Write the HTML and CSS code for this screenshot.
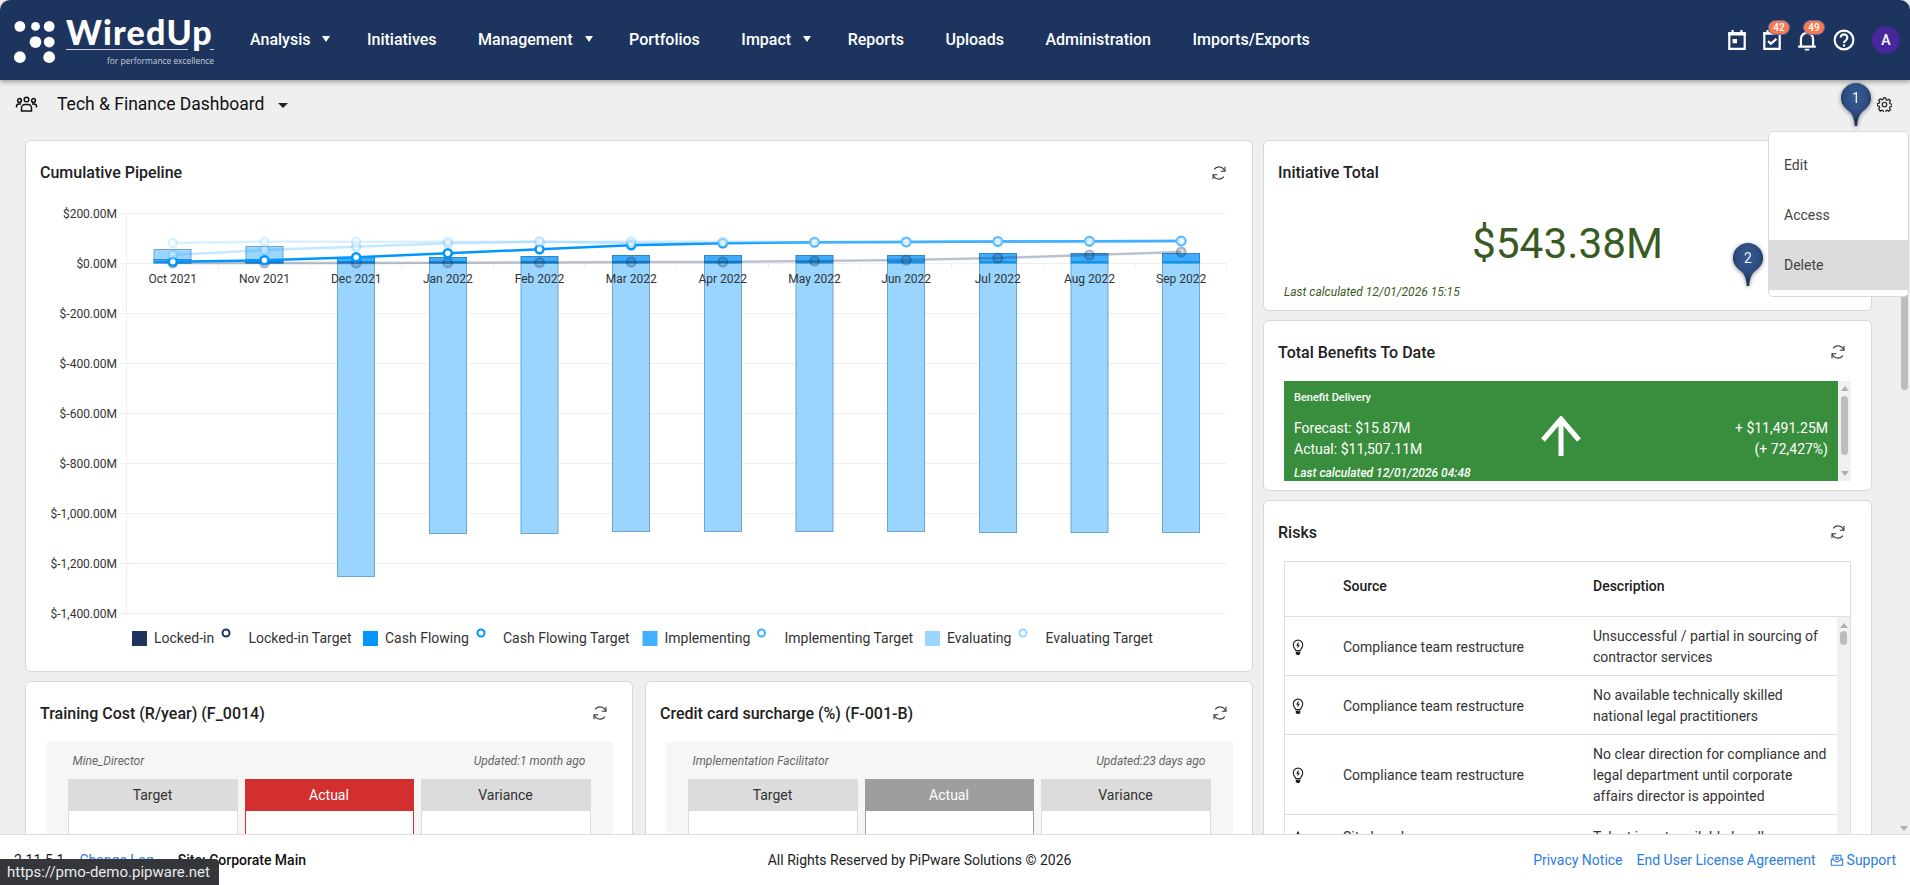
FILE: index.html
```html
<!DOCTYPE html>
<html lang="en">
<head>
<meta charset="utf-8">
<title>Tech &amp; Finance Dashboard</title>
<link rel="stylesheet" href="styles.css">
</head>
<body>
<svg class="defs" aria-hidden="true">
  <symbol id="i-refresh" viewBox="0 0 16 16">
    <g fill="none" stroke="currentColor" stroke-width="1.100">
      <path d="M13.6 6.2A5.8 5.8 0 0 0 3.2 4.400M2.400 9.800A5.800 5.800 0 0 0 12.800 11.600"/>
      <path d="M14 1.800v4.400H9.800M2 14.200V9.800h4.200"/>
    </g>
  </symbol>
  <symbol id="i-bulb" viewBox="0 0 12 18">
    <g fill="none" stroke="#222" stroke-width="1.200">
      <path d="M3.500 12.200C3.200 10.400 1 9.400 1 6.200a5 5 0 0 1 10 0c0 3.200-2.200 4.200-2.500 6z"/>
      <path d="M6.500 3.600 5 6.600h2L5.500 9"/>
    </g>
    <path d="M3.600 13.200h4.800v2.200l-1 1.600H4.600l-1-1.600z" fill="#222"/>
  </symbol>
  <symbol id="i-star" viewBox="0 0 16 16">
    <path d="M8 1.600l2 4.300 4.600.5-3.400 3.200.9 4.600L8 11.900l-4.100 2.300.9-4.600L1.400 6.400 6 5.900z" fill="none" stroke="#222" stroke-width="1.200"/>
  </symbol>
</svg>

<header class="topbar">
  <a class="logo">
    <svg class="logo-dots" viewBox="0 0 44 44" aria-hidden="true">
      <g fill="#fff">
        <circle cx="6" cy="5.500" r="5.500"/><circle cx="22" cy="5.500" r="4.500"/><circle cx="36" cy="5.500" r="5.500"/>
        <circle cx="22" cy="21.500" r="6"/><circle cx="36" cy="21.500" r="5.500"/>
        <circle cx="6" cy="37" r="6"/><circle cx="36" cy="37" r="6"/>
      </g>
    </svg>
    <span class="logo-text">
      <span class="logo-name">WiredUp</span>
      <span class="logo-rule"><i></i><i></i></span>
      <span class="logo-tag">for performance excellence</span>
    </span>
  </a>
  <nav class="nav">
    <a class="nav-item has-caret">Analysis</a>
    <a class="nav-item">Initiatives</a>
    <a class="nav-item has-caret">Management</a>
    <a class="nav-item">Portfolios</a>
    <a class="nav-item has-caret">Impact</a>
    <a class="nav-item">Reports</a>
    <a class="nav-item">Uploads</a>
    <a class="nav-item">Administration</a>
    <a class="nav-item">Imports/Exports</a>
  </nav>
  <div class="top-icons">
    <span class="top-icon">
      <svg viewBox="1 1 20 20" aria-hidden="true"><path d="M4 5h14v14H4z" fill="none" stroke="#fff" stroke-width="2"/><path d="M3 4h16v3H3zM6 2h2v3H6zM14 2h2v3h-2zM7 10h4v4H7z" fill="#fff"/></svg>
    </span>
    <span class="top-icon">
      <svg viewBox="1 1 20 20" aria-hidden="true"><path d="M4 5h14v14H4z" fill="none" stroke="#fff" stroke-width="2"/><path d="M3 4h16v2H3zM6 2h2v3H6zM14 2h2v3h-2z" fill="#fff"/><path d="M7.500 12l2.500 2.500 5-4.500" fill="none" stroke="#fff" stroke-width="2"/></svg>
      <b class="badge">42</b>
    </span>
    <span class="top-icon">
      <svg viewBox="1 1 20 20" aria-hidden="true"><path d="M3 17h16M5.500 17V10a5.500 5.500 0 0 1 11 0v7" fill="none" stroke="#fff" stroke-width="2"/><path d="M9 19h4v1.500H9zM10 2.500h2v2h-2z" fill="#fff"/></svg>
      <b class="badge">49</b>
    </span>
    <span class="top-icon help">
      <svg viewBox="1 1 20 20" aria-hidden="true"><circle cx="11" cy="11" r="8.500" fill="none" stroke="#fff" stroke-width="2"/><path d="M8 8.800a3 3 0 1 1 4.700 2.500c-1.100.7-1.700 1.200-1.700 2.400" fill="none" stroke="#fff" stroke-width="2"/><rect x="10" y="15" width="2" height="2" fill="#fff"/></svg>
    </span>
    <span class="avatar">A</span>
  </div>
</header>

<div class="subbar">
  <svg class="group-icon" viewBox="0 0 22 16" aria-hidden="true">
    <g fill="none" stroke="#111" stroke-width="1.500">
      <circle cx="11" cy="3.500" r="2.300"/><circle cx="4" cy="4.500" r="1.900"/><circle cx="18" cy="4.500" r="1.900"/>
      <path d="M6 15v-3a3.500 3.500 0 0 1 3.500-3.500h3A3.500 3.500 0 0 1 16 12v3zM1 11.500v-1.200C1 9 2 8 3.500 8h2M21 11.500v-1.200C21 9 20 8 18.500 8h-2"/>
    </g>
  </svg>
  <h1 class="page-title">Tech &amp; Finance Dashboard</h1>
  <span class="caret dark"></span>
  <svg class="gear" viewBox="0 0 16 16" aria-hidden="true">
    <path d="M6.800 1h2.400l.4 2 1.300.6 1.800-1.100 1.600 1.700-1.100 1.700.6 1.400 2 .4v2.400l-2 .4-.6 1.400 1.100 1.700-1.700 1.600-1.700-1.100-1.300.6-.4 2H6.800l-.4-2-1.300-.6-1.800 1.100L1.700 13l1.100-1.700-.6-1.400-2-.4V7.100l2-.4.6-1.400-1.100-1.700 1.700-1.600 1.700 1.100 1.300-.6z" fill="none" stroke="#222" stroke-width="1.300" transform="translate(.1 -.1)"/>
    <circle cx="8" cy="8" r="2.400" fill="none" stroke="#222" stroke-width="1.300"/>
  </svg>
</div>

<main class="page">
  <div class="dashboard">
    <div class="col-left">
      <section class="card card-pipeline">
        <div class="card-head"><h2>Cumulative Pipeline</h2><svg class="refresh"><use href="#i-refresh"/></svg></div>
        <svg class="chart" viewBox="26 202 1226 469" aria-label="Cumulative Pipeline chart">
          <g class="grid">
            <path d="M120 213.500H1226.500M120 263.500H1226.500M120 313.500H1226.500M120 363.500H1226.500M120 413.500H1226.500M120 463.500H1226.500M120 513.500H1226.500M120 563.500H1226.500M120 613.500H1226.500"/>
            <path d="M126.500 213V613M218.500 263v6M310 263v6M401.500 263v6M493.500 263v6M585 263v6M676.500 263v6M768.500 263v6M860 263v6M951.500 263v6M1043.500 263v6M1135 263v6M1226.500 263v6"/>
          </g>
          <g class="bars-eval">
            <rect x="154" y="249.500" width="37" height="13.500"/>
            <rect x="246" y="246.500" width="37" height="16.500"/>
            <rect x="337.500" y="263" width="37" height="313.500"/>
            <rect x="429.500" y="263" width="37" height="270.500"/>
            <rect x="521" y="263" width="37" height="270.500"/>
            <rect x="612.500" y="263" width="37" height="268.500"/>
            <rect x="704.500" y="263" width="37" height="268.500"/>
            <rect x="796" y="263" width="37" height="268.500"/>
            <rect x="887.500" y="263" width="37" height="268.500"/>
            <rect x="979.500" y="263" width="37" height="269.500"/>
            <rect x="1071" y="263" width="37" height="269.500"/>
            <rect x="1162.500" y="263" width="37" height="269.500"/>
          </g>
          <g class="bars-impl">
            <rect x="154" y="259.500" width="37" height="3.500"/>
            <rect x="246" y="259.500" width="37" height="3.500"/>
            <rect x="337.500" y="257.500" width="37" height="5.500"/>
            <rect x="429.500" y="257.500" width="37" height="5.500"/>
            <rect x="521" y="256.500" width="37" height="6.500"/>
            <rect x="612.500" y="255.500" width="37" height="7.500"/>
            <rect x="704.500" y="255.500" width="37" height="7.500"/>
            <rect x="796" y="255.500" width="37" height="7.500"/>
            <rect x="887.500" y="255.500" width="37" height="7.500"/>
            <rect x="979.500" y="253.500" width="37" height="9.500"/>
            <rect x="1071" y="253.500" width="37" height="9.500"/>
            <rect x="1162.500" y="253.500" width="37" height="9.500"/>
          </g>
          <g class="bars-cash">
            <rect x="154" y="261" width="37" height="2"/>
            <rect x="246" y="261" width="37" height="2"/>
            <rect x="337.500" y="261" width="37" height="2"/>
            <rect x="429.500" y="261" width="37" height="2"/>
            <rect x="521" y="261" width="37" height="2"/>
            <rect x="612.500" y="261" width="37" height="2"/>
            <rect x="704.500" y="261" width="37" height="2"/>
            <rect x="796" y="261" width="37" height="2"/>
            <rect x="887.500" y="261" width="37" height="2"/>
            <rect x="979.500" y="261" width="37" height="2"/>
            <rect x="1071" y="261" width="37" height="2"/>
            <rect x="1162.500" y="261" width="37" height="2"/>
          </g>
          <g class="line-locked">
            <polyline points="172.800,263 264.500,263 356.200,263 447.800,262.700 539.500,262.500 631.200,262 722.800,262 814.500,261 906.200,260 997.800,258 1089.500,255 1181.200,252"/>
            <circle cx="172.800" cy="263" r="4.500"/><circle cx="264.500" cy="263" r="4.500"/><circle cx="356.200" cy="263" r="4.500"/><circle cx="447.800" cy="262.700" r="4.500"/><circle cx="539.500" cy="262.500" r="4.500"/><circle cx="631.200" cy="262" r="4.500"/><circle cx="722.800" cy="262" r="4.500"/><circle cx="814.500" cy="261" r="4.500"/><circle cx="906.200" cy="260" r="4.500"/><circle cx="997.800" cy="258" r="4.500"/><circle cx="1089.500" cy="255" r="4.500"/><circle cx="1181.200" cy="252" r="4.500"/>
          </g>
          <g class="line-cash">
            <polyline points="172.800,261.700 264.500,260.300 356.200,257.300 447.800,253.300 539.500,249.300 631.200,245.300 722.800,243.300 814.500,242.300 906.200,242 997.800,241.500 1089.500,241.300 1181.200,241"/>
            <circle cx="172.800" cy="261.700" r="4"/><circle cx="264.500" cy="260.300" r="4"/><circle cx="356.200" cy="257.300" r="4"/><circle cx="447.800" cy="253.300" r="4"/><circle cx="539.500" cy="249.300" r="4"/><circle cx="631.200" cy="245.300" r="4"/><circle cx="722.800" cy="243.300" r="4"/><circle cx="814.500" cy="242.300" r="4"/><circle cx="906.200" cy="242" r="4"/><circle cx="997.800" cy="241.500" r="4"/><circle cx="1089.500" cy="241.300" r="4"/><circle cx="1181.200" cy="241" r="4"/>
          </g>
          <g class="line-impl">
            <polyline points="172.800,255 264.500,250 356.200,246.700 447.800,243.300 539.500,241.700 631.200,243 722.800,243 814.500,242.300 906.200,242 997.800,241.500 1089.500,241.300 1181.200,241"/>
            <circle cx="172.800" cy="255" r="4"/><circle cx="264.500" cy="250" r="4"/><circle cx="356.200" cy="246.700" r="4"/><circle cx="447.800" cy="243.300" r="4"/><circle cx="539.500" cy="241.700" r="4"/><circle cx="631.200" cy="243" r="4"/><circle cx="722.800" cy="243" r="4"/><circle cx="814.500" cy="242.300" r="4"/><circle cx="906.200" cy="242" r="4"/><circle cx="997.800" cy="241.500" r="4"/><circle cx="1089.500" cy="241.300" r="4"/><circle cx="1181.200" cy="241" r="4"/>
          </g>
          <g class="line-eval">
            <polyline points="172.800,243 264.500,241.700 356.200,241.700 447.800,241.700 539.500,241.700 631.200,241.500 722.800,241.500 814.500,242 906.200,242 997.800,241.500 1089.500,241.300 1181.200,241"/>
            <circle cx="172.800" cy="243" r="4"/><circle cx="264.500" cy="241.700" r="4"/><circle cx="356.200" cy="241.700" r="4"/><circle cx="447.800" cy="241.700" r="4"/><circle cx="539.500" cy="241.700" r="4"/><circle cx="631.200" cy="241.500" r="4"/><circle cx="722.800" cy="241.500" r="4"/><circle cx="814.500" cy="242" r="4"/><circle cx="906.200" cy="242" r="4"/><circle cx="997.800" cy="241.500" r="4"/><circle cx="1089.500" cy="241.300" r="4"/><circle cx="1181.200" cy="241" r="4"/>
          </g>
          <g class="axis-y">
            <text x="117" y="217.500">$200.00M</text>
            <text x="117" y="267.500">$0.00M</text>
            <text x="117" y="317.500">$-200.00M</text>
            <text x="117" y="367.500">$-400.00M</text>
            <text x="117" y="417.500">$-600.00M</text>
            <text x="117" y="467.500">$-800.00M</text>
            <text x="117" y="517.500">$-1,000.00M</text>
            <text x="117" y="567.500">$-1,200.00M</text>
            <text x="117" y="617.500">$-1,400.00M</text>
          </g>
          <g class="axis-x">
            <text x="172.800" y="282.500">Oct 2021</text>
            <text x="264.500" y="282.500">Nov 2021</text>
            <text x="356.200" y="282.500">Dec 2021</text>
            <text x="447.800" y="282.500">Jan 2022</text>
            <text x="539.500" y="282.500">Feb 2022</text>
            <text x="631.200" y="282.500">Mar 2022</text>
            <text x="722.800" y="282.500">Apr 2022</text>
            <text x="814.500" y="282.500">May 2022</text>
            <text x="906.200" y="282.500">Jun 2022</text>
            <text x="997.800" y="282.500">Jul 2022</text>
            <text x="1089.500" y="282.500">Aug 2022</text>
            <text x="1181.200" y="282.500">Sep 2022</text>
          </g>
          <g class="legend">
            <rect class="sw-locked" x="132" y="631" width="15" height="15"/><text x="154" y="643">Locked-in</text>
            <circle class="mk-locked" cx="226" cy="633" r="3.500"/><text x="248.500" y="643">Locked-in Target</text>
            <rect class="sw-cash" x="363" y="631" width="15" height="15"/><text x="385" y="643">Cash Flowing</text>
            <circle class="mk-cash" cx="481" cy="633" r="3.500"/><text x="503" y="643">Cash Flowing Target</text>
            <rect class="sw-impl" x="642.500" y="631" width="15" height="15"/><text x="664.500" y="643">Implementing</text>
            <circle class="mk-impl" cx="761.500" cy="633" r="3.500"/><text x="784.500" y="643">Implementing Target</text>
            <rect class="sw-eval" x="925" y="631" width="15" height="15"/><text x="947" y="643">Evaluating</text>
            <circle class="mk-eval" cx="1023" cy="633" r="3.500"/><text x="1045.500" y="643">Evaluating Target</text>
          </g>
        </svg>
      </section>
      <div class="metric-row">
        <section class="card card-metric">
          <div class="card-head"><h2>Training Cost (R/year) (F_0014)</h2><svg class="refresh"><use href="#i-refresh"/></svg></div>
          <div class="metric-box">
            <div class="metric-meta"><span>Mine_Director</span><span>Updated:1 month ago</span></div>
            <div class="metric-cells">
              <div class="cell"><div class="cell-head">Target</div><div class="cell-body"></div></div>
              <div class="cell cell-red"><div class="cell-head">Actual</div><div class="cell-body"></div></div>
              <div class="cell"><div class="cell-head">Variance</div><div class="cell-body"></div></div>
            </div>
          </div>
        </section>
        <section class="card card-metric">
          <div class="card-head"><h2>Credit card surcharge (%) (F-001-B)</h2><svg class="refresh"><use href="#i-refresh"/></svg></div>
          <div class="metric-box">
            <div class="metric-meta"><span>Implementation Facilitator</span><span>Updated:23 days ago</span></div>
            <div class="metric-cells">
              <div class="cell"><div class="cell-head">Target</div><div class="cell-body"></div></div>
              <div class="cell cell-grey"><div class="cell-head">Actual</div><div class="cell-body"></div></div>
              <div class="cell"><div class="cell-head">Variance</div><div class="cell-body"></div></div>
            </div>
          </div>
        </section>
      </div>
    </div>

    <div class="col-right">
      <section class="card card-total">
        <div class="card-head"><h2>Initiative Total</h2></div>
        <div class="total-value">$543.38M</div>
        <div class="total-note">Last calculated 12/01/2026 15:15</div>
      </section>
      <section class="card card-benefits">
        <div class="card-head"><h2>Total Benefits To Date</h2><svg class="refresh"><use href="#i-refresh"/></svg></div>
        <div class="delivery">
          <div class="delivery-main">
            <div class="delivery-title">Benefit Delivery</div>
            <div class="delivery-grid">
              <div>Forecast: $15.87M<br>Actual: $11,507.11M</div>
              <svg class="delivery-arrow" viewBox="0 0 40 40" aria-hidden="true"><path d="M20 40V3M2 24L20 3l18 21" fill="none" stroke="#fff" stroke-width="5"/></svg>
              <div class="delivery-delta">+ $11,491.25M<br>(+ 72,427%)</div>
            </div>
            <div class="delivery-note">Last calculated 12/01/2026 04:48</div>
          </div>
          <div class="mini-scroll">
            <span class="arrow-up"></span>
            <span class="mini-thumb"></span>
            <span class="arrow-down"></span>
          </div>
        </div>
      </section>
      <section class="card card-risks">
        <div class="card-head"><h2>Risks</h2><svg class="refresh"><use href="#i-refresh"/></svg></div>
        <div class="risk-table">
          <div class="risk-head"><span></span><span>Source</span><span>Description</span></div>
          <div class="risk-body">
            <div class="risk-rows">
              <div class="risk-row"><svg class="risk-icon"><use href="#i-bulb"/></svg><span>Compliance team restructure</span><span>Unsuccessful / partial in sourcing of contractor services</span></div>
              <div class="risk-row"><svg class="risk-icon"><use href="#i-bulb"/></svg><span>Compliance team restructure</span><span>No available technically skilled national legal practitioners</span></div>
              <div class="risk-row"><svg class="risk-icon"><use href="#i-bulb"/></svg><span>Compliance team restructure</span><span>No clear direction for compliance and legal department until corporate affairs director is appointed</span></div>
              <div class="risk-row risk-row-last"><svg class="risk-icon"><use href="#i-star"/></svg><span>Site Legal</span><span>Talent is not available locally</span></div>
            </div>
            <div class="mini-scroll mini-scroll-table">
              <span class="arrow-up"></span>
              <span class="mini-thumb mini-thumb-small"></span>
            </div>
          </div>
        </div>
      </section>
    </div>
  </div>
  <div class="page-scroll">
    <span class="page-thumb"></span>
    <span class="arrow-down"></span>
  </div>
</main>

<footer class="footer">
  <div class="foot-left"><span>2.11.5.1</span><a>Change Log</a><strong>Site: Corporate Main</strong></div>
  <div class="foot-center">All Rights Reserved by PiPware Solutions © 2026</div>
  <div class="foot-right">
    <a>Privacy Notice</a>
    <a>End User License Agreement</a>
    <a class="support"><svg viewBox="0 0 16 16" aria-hidden="true"><path d="M1.500 6.500v7.500h13V6.500M1.500 6.500L8 10.500l6.500-4M3.500 8V2.500h9V8M6 5h4M6 7h4" fill="none" stroke="#2a7de1" stroke-width="1.200"/></svg>Support</a>
  </div>
</footer>

<div class="status-bubble">https://pmo-demo.pipware.net</div>

<div class="pin pin-one"><svg viewBox="0 0 30 43" aria-hidden="true"><use href="#pin-shape"/></svg><span>1</span></div>
<div class="pin pin-two"><svg viewBox="0 0 30 43" aria-hidden="true"><use href="#pin-shape"/></svg><span>2</span></div>
<svg class="defs" aria-hidden="true">
  <defs>
    <radialGradient id="pin-fill" cx="50%" cy="32%" r="55%">
      <stop offset="0" stop-color="#3a5c92"/>
      <stop offset=".7" stop-color="#2c4c80"/>
      <stop offset="1" stop-color="#1d355e"/>
    </radialGradient>
  </defs>
  <symbol id="pin-shape" viewBox="0 0 30 43">
    <path d="M15 0C6.700 0 0 6.700 0 15c0 5.800 3.400 9.600 7.500 12.800 3.800 3 5.800 7 6.300 15.200h2.400c.5-8.200 2.500-12.200 6.300-15.200C26.600 24.600 30 20.800 30 15 30 6.700 23.300 0 15 0z" fill="url(#pin-fill)"/>
  </symbol>
</svg>

<ul class="menu">
  <li>Edit</li>
  <li>Access</li>
  <li class="active">Delete</li>
</ul>
</body>
</html>
```
FILE: styles.css
```css
* { box-sizing: border-box; }
html, body { margin: 0; height: 100%; }
body {
  height: 885px;
  overflow: hidden;
  display: flex;
  flex-direction: column;
  background: #efefef;
  color: #212121;
  font-family: Roboto, "Liberation Sans", sans-serif;
  font-size: 14px;
  position: relative;
}
.defs { position: absolute; width: 0; height: 0; }
h1, h2 { margin: 0; }

/* top bar */
.topbar {
  flex: 0 0 80px;
  display: flex;
  align-items: center;
  padding: 0 10px 0 14px;
  background: #1d355e;
  border-radius: 10px 10px 0 0;
  box-shadow: 0 2px 5px rgba(0,0,0,.35);
  color: #fff;
  position: relative;
  z-index: 2;
}
.logo { display: flex; align-items: flex-start; width: 216px; height: 46px; margin-top: 8px; }
.logo-dots { width: 43px; height: 43px; flex: none; }
.logo-text { display: flex; flex-direction: column; width: 148px; margin: -3px 0 0 9px; }
.logo-name {
  font-family: Lato, Roboto, sans-serif;
  font-weight: 900;
  font-size: 34px;
  line-height: 27px;
  letter-spacing: 1.200px;
  white-space: nowrap;
}
.logo-rule { display: flex; gap: 22px; margin-top: 4px; }
.logo-rule i { display: block; height: 1px; background: #c9d2e0; flex: 1; }
.logo-rule i:last-child { flex: 0 0 4px; }
.logo-tag {
  margin-top: 5px;
  text-align: right;
  font-family: "Open Sans", sans-serif;
  font-size: 8.400px;
  line-height: 12px;
  color: #c7cedb;
  white-space: nowrap;
}
.nav { display: flex; align-items: center; padding: 0 0 2px 20px; }
.nav-item {
  display: flex;
  align-items: center;
  font-size: 16px;
  font-weight: 500;
  padding-right: 41.500px;
  white-space: nowrap;
}
.has-caret { padding-right: 36.500px; }
.has-caret::after {
  content: "";
  margin-left: 12px;
  border-top: 6px solid #fff;
  border-left: 4px solid transparent;
  border-right: 4px solid transparent;
}
.top-icons { margin-left: auto; display: flex; align-items: center; gap: 13px; }
.top-icon { position: relative; width: 22px; height: 22px; display: block; }
.top-icon svg { display: block; width: 22px; height: 22px; }
.help { margin-left: 2px; }
.badge {
  position: absolute;
  top: -9px;
  left: 7px;
  width: 22px;
  height: 15px;
  border-radius: 8px;
  background: #f47c50;
  border: 1px solid #6a5fa8;
  font-size: 10px;
  font-weight: 500;
  line-height: 13px;
  text-align: center;
  color: #fff;
}
.avatar {
  width: 28px;
  height: 28px;
  margin-left: 4px;
  border-radius: 50%;
  background: #47289b;
  text-align: center;
  line-height: 28px;
  font-weight: 500;
  font-size: 14px;
}

/* sub bar */
.subbar {
  flex: 0 0 50px;
  display: flex;
  align-items: center;
  padding: 0 18px 2px 15px;
}
.group-icon { width: 23px; height: 16px; flex: none; }
.page-title { font-size: 17.500px; font-weight: 400; margin-left: 19px; color: #111; }
.caret { display: block; }
.caret.dark {
  margin-left: 14px;
  margin-top: 2px;
  border-top: 5px solid #222;
  border-left: 5px solid transparent;
  border-right: 5px solid transparent;
}
.gear { width: 15px; height: 15px; margin-left: auto; }

/* page */
.page {
  flex: 1;
  min-height: 0;
  display: flex;
  overflow: hidden;
  padding: 10px 0 0 25px;
}
.dashboard {
  flex: 0 0 1847px;
  display: flex;
  gap: 10px;
  align-items: flex-start;
}
.col-left { flex: 0 0 1228px; display: flex; flex-direction: column; gap: 9px; }
.col-right { flex: 0 0 609px; display: flex; flex-direction: column; gap: 9px; }
.card {
  background: #fff;
  border: 1px solid #d8d8d8;
  border-radius: 6px;
  flex: none;
}
.card-head {
  height: 60px;
  display: flex;
  align-items: center;
  justify-content: space-between;
  padding: 2px 12px 0 14px;
}
.card-head h2 { font-size: 16px; font-weight: 500; color: #212121; }
.refresh { width: 16px; height: 16px; color: #333; margin-right: 13px; }
.card-metric .refresh { margin-right: 12px; }

.card-pipeline { height: 532px; }
.card-pipeline .card-head { height: 61px; }
.chart { display: block; width: 1226px; height: 469px; }
.grid path { fill: none; stroke: #eeeeee; stroke-width: 1; }
.bars-eval rect { fill: #99d5ff; stroke: #6ea6cc; stroke-width: 1; }
.bars-impl rect { fill: #3fadfb; stroke: #2f87c4; stroke-width: 1; }
.bars-cash rect { fill: #0a94f5; }
.line-locked polyline { fill: none; stroke: #1d355e; stroke-opacity: .3; stroke-width: 2.500; }
.line-locked circle { fill: #1d355e; fill-opacity: .18; stroke: #1d355e; stroke-opacity: .32; stroke-width: 2; }
.line-cash polyline { fill: none; stroke: #0096ff; stroke-width: 2.500; }
.line-cash circle { fill: #fff; stroke: #0096ff; stroke-width: 2.500; }
.line-impl polyline { fill: none; stroke: #40b0ff; stroke-opacity: .3; stroke-width: 2.500; }
.line-impl circle { fill: #fff; fill-opacity: .4; stroke: #40b0ff; stroke-opacity: .3; stroke-width: 2.500; }
.line-eval polyline { fill: none; stroke: #99d5ff; stroke-opacity: .35; stroke-width: 2.500; }
.line-eval circle { fill: #fff; fill-opacity: .4; stroke: #99d5ff; stroke-opacity: .35; stroke-width: 2.500; }
.axis-y text { font-size: 12px; fill: #333; text-anchor: end; }
.axis-x text { font-size: 12px; fill: #333; text-anchor: middle; }
.legend text { font-size: 14px; fill: #333; }
.sw-locked { fill: #1d355e; }
.sw-cash { fill: #0096ff; }
.sw-impl { fill: #40b0ff; }
.sw-eval { fill: #99d5ff; }
.legend circle { fill: #fff; stroke-width: 2; }
.mk-locked { stroke: #1d355e; }
.mk-cash { stroke: #0096ff; }
.mk-impl { stroke: #40b0ff; }
.mk-eval { stroke: #99d5ff; }

.metric-row { display: flex; gap: 12px; }
.card-metric { flex: 1; height: 300px; }
.metric-box {
  margin: 0 19.500px;
  height: 220px;
  background: #f6f6f6;
  padding: 0 22px;
}
.metric-meta {
  display: flex;
  justify-content: space-between;
  height: 37px;
  padding: 0 5px;
  align-items: center;
  font-size: 12px;
  font-style: italic;
  color: #666;
}
.metric-cells { display: grid; grid-template-columns: 170px 169px 170px; gap: 7px; }
.cell-head {
  height: 32px;
  line-height: 32px;
  text-align: center;
  background: #dcdcdc;
  color: #333;
}
.cell-body { height: 120px; background: #fff; border: 1px solid #dcdcdc; border-top: 0; }
.cell-red .cell-head { background: #d32f2f; color: #fff; }
.cell-red .cell-body { border-color: #d32f2f; }
.cell-grey .cell-head { background: #9e9e9e; color: #fff; }
.cell-grey .cell-body { border-color: #9e9e9e; }

.card-total { height: 171px; }
.total-value {
  margin-top: 18px;
  text-align: center;
  font-size: 42.400px;
  line-height: 50px;
  color: #3a5a24;
}
.total-note {
  margin: 16px 0 0 20px;
  font-size: 12px;
  line-height: 14px;
  font-style: italic;
  color: #3a5a24;
}

.card-benefits { height: 171px; }
.delivery { display: flex; height: 100px; margin: 0 20px; }
.delivery-main {
  flex: 1;
  min-width: 0;
  background: #388e3c;
  color: #fff;
  padding: 10px 10px 0;
  overflow: hidden;
}
.delivery-title { font-size: 11px; line-height: 14px; font-weight: 500; }
.delivery-grid {
  display: grid;
  grid-template-columns: 1fr 40px 1fr;
  margin-top: 13px;
  line-height: 21px;
  height: 42px;
}
.delivery-arrow { width: 40px; height: 40px; display: block; margin-top: -2px; }
.delivery-delta { text-align: right; }
.delivery-note { margin-top: 6px; font-size: 12px; line-height: 14px; font-style: italic; font-weight: 500; }
.mini-scroll {
  flex: 0 0 13px;
  background: #f1f1f1;
  display: flex;
  flex-direction: column;
  align-items: center;
  position: relative;
}
.arrow-up, .arrow-down { display: block; width: 0; height: 0; border-left: 4px solid transparent; border-right: 4px solid transparent; }
.arrow-up { border-bottom: 5px solid #b0b0b0; margin-top: 5px; }
.arrow-down { border-top: 5px solid #b0b0b0; margin-top: auto; margin-bottom: 5px; }
.mini-thumb { width: 7px; height: 59px; margin-top: 5px; border-radius: 4px; background: #bdbdbd; }
.mini-thumb-small { height: 14px; margin-top: 3px; }

.card-risks { height: 400px; }
.risk-table { margin: 0 20px; border: 1px solid #dedede; height: 330px; }
.risk-head {
  height: 55px;
  display: grid;
  grid-template-columns: 58px 250px 1fr;
  padding-top: 14px;
  line-height: 21px;
  font-weight: 500;
  border-bottom: 1px solid #dedede;
}
.risk-body { display: flex; }
.risk-rows { flex: 1; min-width: 0; }
.risk-row {
  display: grid;
  grid-template-columns: 58px 250px 1fr;
  align-items: center;
  padding: 9px 8px 7px 0;
  line-height: 21px;
  border-bottom: 1px solid #dedede;
  color: #333;
}
.risk-row-last { padding-top: 12px; }
.risk-icon { width: 14px; height: 17px; margin-left: 6px; }
.mini-scroll-table { flex: 0 0 13px; height: 260px; }
.mini-scroll-table .arrow-up { margin-top: 6px; }

.page-scroll {
  flex: 0 0 8px;
  margin: 0 0 0 28px;
  display: flex;
  flex-direction: column;
  align-items: center;
  position: relative;
}
.page-thumb { display: block; width: 7px; height: 250px; background: #bdbdbd; border-radius: 4px; }
.page-scroll .arrow-down { margin-bottom: 3px; }

/* footer */
.footer {
  flex: 0 0 51px;
  position: relative;
  z-index: 1;
  display: flex;
  justify-content: space-between;
  align-items: center;
  background: #fff;
  border-top: 1px solid #ddd;
  padding: 0 14px;
  color: #222;
}
.foot-left { display: flex; }
.foot-left a { margin-left: 15px; }
.foot-left strong { margin-left: 24px; font-weight: 500; color: #111; }
.footer a { color: #2a7de1; }
.foot-right { display: flex; justify-content: flex-end; gap: 14px; }
.support { display: flex; align-items: center; gap: 3px; }
.support svg { width: 14px; height: 14px; }

.status-bubble {
  position: absolute;
  left: 0;
  bottom: 0;
  width: 219px;
  height: 26px;
  padding-left: 7px;
  background: #35363a;
  color: #e8eaed;
  font-size: 15px;
  line-height: 26px;
  border-top-right-radius: 4px;
  z-index: 5;
  white-space: nowrap;
}

/* pins and menu */
.pin {
  position: absolute;
  width: 30px;
  height: 43px;
  z-index: 6;
  filter: drop-shadow(0 1px 2px rgba(0,0,0,.45));
}
.pin svg { display: block; width: 30px; height: 43px; }
.pin span {
  position: absolute;
  top: 5px;
  left: 0;
  width: 30px;
  text-align: center;
  color: #f2f4f8;
  font-size: 14px;
  line-height: 20px;
}
.pin-one { left: 1841px; top: 83px; }
.pin-two { left: 1733px; top: 243px; }
.menu {
  position: absolute;
  left: 1768px;
  top: 131px;
  width: 141px;
  height: 166px;
  margin: 0;
  padding: 8px 0;
  list-style: none;
  background: #fff;
  border: 1px solid #d8d8d8;
  border-radius: 5px;
  z-index: 4;
  color: #444;
}
.menu li { height: 50px; line-height: 50px; padding-left: 15px; }
.menu .active { background: #dcdcdc; }
```
